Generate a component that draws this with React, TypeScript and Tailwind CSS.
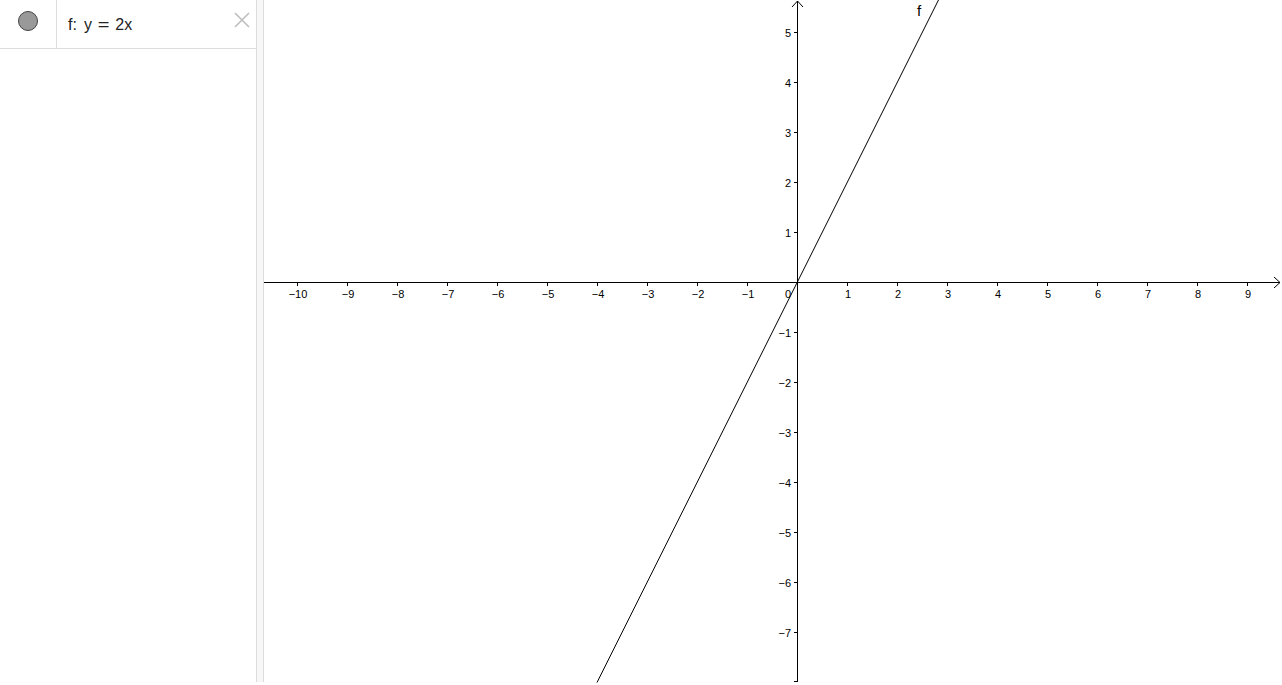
import React from 'react';

const OX = 533; // origin x inside graphics view
const OY = 282;
const U = 50;

function Graph() {
  const xs = [-10, -9, -8, -7, -6, -5, -4, -3, -2, -1, 1, 2, 3, 4, 5, 6, 7, 8, 9];
  const ys = [5, 4, 3, 2, 1, -1, -2, -3, -4, -5, -6, -7];
  const lab = (n: number) => (n < 0 ? `\u2212${-n}` : `${n}`);
  return (
    <svg width="1018" height="685" className="block" style={{ fontFamily: '"Liberation Sans", Arial, sans-serif' }}>
      {/* x axis */}
      <line x1="0" y1={OY + 0.5} x2="1016" y2={OY + 0.5} stroke="#000" strokeWidth="1" />
      <polyline points={`1010,${OY - 5} 1016,${OY + 0.5} 1010,${OY + 6}`} fill="none" stroke="#000" strokeWidth="1" />
      {/* y axis */}
      <line x1={OX + 0.5} y1="1" x2={OX + 0.5} y2="682" stroke="#000" strokeWidth="1" />
      <polyline points={`${OX - 5},7 ${OX + 0.5},1 ${OX + 6},7`} fill="none" stroke="#000" strokeWidth="1" />
      <line x1={OX - 3} y1="681.5" x2={OX + 0.5} y2="681.5" stroke="#000" strokeWidth="1" />
      {xs.map((n) => (
        <g key={`x${n}`}>
          <line x1={OX + n * U + 0.5} y1={OY} x2={OX + n * U + 0.5} y2={OY + 4} stroke="#000" />
          <text x={OX + n * U + 1} y={OY + 16} fontSize="11" textAnchor="middle" fill="#000">
            {lab(n)}
          </text>
        </g>
      ))}
      <text x={OX - 6} y={OY + 16} fontSize="11" textAnchor="end" fill="#000">0</text>
      {ys.map((n) => (
        <g key={`y${n}`}>
          <line x1={OX - 3} y1={OY - n * U + 0.5} x2={OX} y2={OY - n * U + 0.5} stroke="#000" />
          <text x={OX - 6} y={OY - n * U + 4.5} fontSize="11" textAnchor="end" fill="#000">
            {lab(n)}
          </text>
        </g>
      ))}
      {/* f: y = 2x */}
      <line x1={OX + 0.5 - 4.01 * U} y1={OY + 8.01 * U} x2={OX + 0.5 + 2.84 * U} y2={OY - 5.68 * U} stroke="#000" strokeWidth="1" />
      <text x="653" y="16" fontSize="15" fill="#000">f</text>
    </svg>
  );
}

export default function App() {
  return (
    <div className="flex h-[685px] w-[1282px] overflow-hidden bg-white" style={{ fontFamily: '"Liberation Sans", Arial, sans-serif' }}>
      {/* Algebra view */}
      <div className="w-[256px] shrink-0">
        <div className="flex h-[49px] border-b border-[#dcdcdc]">
          <div className="flex w-[57px] shrink-0 justify-center border-r border-[#dcdcdc] pt-[11px]">
            <div className="h-[20px] w-[20px] rounded-full border border-[#444] bg-[#999]" />
          </div>
          <div className="flex flex-1 items-start justify-between pl-[11px] pr-[5px] pt-[15px]">
            <span className="flex text-[16px] leading-[20px] text-[#222]">
              <span>f:</span>
              <span className="ml-[7px]">y</span>
              <span className="ml-[7px] inline-block scale-x-125">=</span>
              <span className="ml-[7px]">2x</span>
            </span>
            <svg width="18" height="18" viewBox="0 0 18 18" className="mt-[-4px]">
              <path d="M2 2 L16 16 M16 2 L2 16" stroke="#bcbcbc" strokeWidth="1.5" />
            </svg>
          </div>
        </div>
      </div>
      {/* splitter */}
      <div className="h-[682px] w-[8px] shrink-0 border-x border-[#dcdcdc] bg-[#f7f7f7]" />
      {/* Graphics view */}
      <div className="flex-1">
        <Graph />
      </div>
    </div>
  );
}
